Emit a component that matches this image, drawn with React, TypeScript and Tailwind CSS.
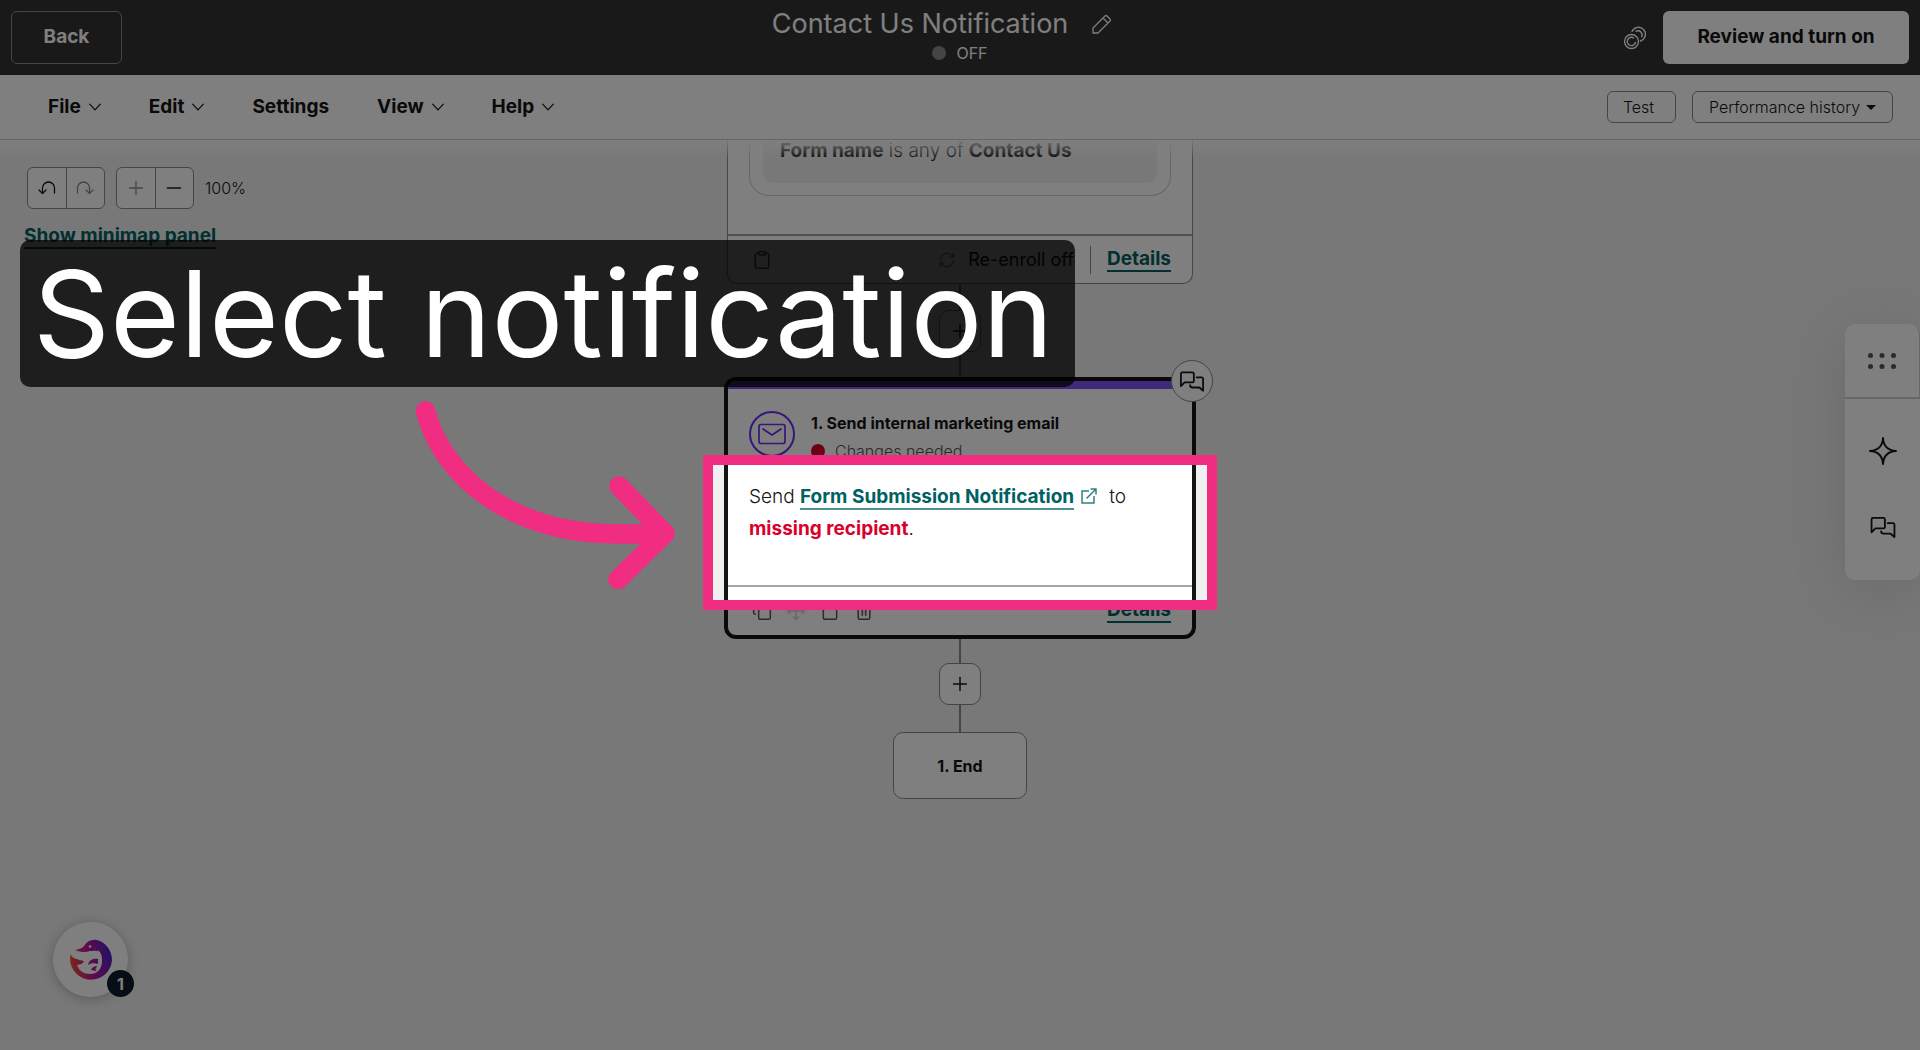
import type { ReactNode } from 'react';
import { Clipboard, Copy, Minus, Move, Plus, RefreshCw, Trash2 } from 'lucide-react';

const menus = [
  { label: 'File', hasMenu: true },
  { label: 'Edit', hasMenu: true },
  { label: 'Settings', hasMenu: false },
  { label: 'View', hasMenu: true },
  { label: 'Help', hasMenu: true },
];

const ChevronIcon = () => (
  <svg viewBox="0 0 12 8" className="h-2 w-3" fill="none" stroke="currentColor" strokeWidth="1.200" strokeLinecap="round" strokeLinejoin="round">
    <path d="M.7 1.200L6 6.800l5.300-5.600" />
  </svg>
);

const CommentsIcon = ({ className }: { className: string }) => (
  <svg viewBox="0 0 26 22" className={className} fill="none" stroke="currentColor" strokeWidth="1.900" strokeLinejoin="round" strokeLinecap="round">
    <path d="M1 16V2.500A1.500 1.500 0 0 1 2.500 1h11A1.500 1.500 0 0 1 15 2.500v8a1.500 1.500 0 0 1-1.500 1.500H5z" />
    <path d="M18 6.500h5.500A1.500 1.500 0 0 1 25 8v13l-4-3.500h-7.500A2.500 2.500 0 0 1 11 15" />
  </svg>
);

const PencilIcon = () => (
  <svg viewBox="0 0 20 20" className="size-5" fill="none" stroke="currentColor" strokeWidth="1.300" strokeLinejoin="round">
    <path d="M1 19v-5L13 2a1.500 1.500 0 0 1 2 0l3 3a1.500 1.500 0 0 1 0 2L6 19zM11 4l5 5" />
  </svg>
);

const CoinsIcon = () => (
  <svg viewBox="0 0 24 24" className="size-6" fill="none" stroke="currentColor" strokeWidth="1.400" strokeLinecap="round">
    <circle cx="8.500" cy="15.500" r="7" />
    <path d="M10.500 11.800a4.200 4.200 0 1 0 2 4.700" />
    <path d="M9 5.500a7 7 0 1 1 8.500 9.500" />
    <path d="M13 5.200a4.200 4.200 0 0 1 5.700 5.500" />
  </svg>
);

const UndoIcon = ({ className }: { className: string }) => (
  <svg viewBox="0 0 18 14" className={className} fill="none" stroke="currentColor" strokeWidth="1.300" strokeLinecap="round" strokeLinejoin="round">
    <path d="M1 9l3.500 3.500L8 9M4.500 12V7a6 6 0 0 1 12 0v5" />
  </svg>
);

const ExternalIcon = () => (
  <svg viewBox="0 0 16 16" className="mr-3 ml-[7px] inline size-4 align-[-1px] text-[#338182]" fill="none" stroke="currentColor" strokeWidth="1.500">
    <path d="M8 3H1v12h12V8M5.500 10.500L15 1M9.500 1H15v5.500" />
  </svg>
);

const MailIcon = () => (
  <svg viewBox="0 0 28 22" className="h-[22px] w-7" fill="none" stroke="currentColor" strokeWidth="1.700" strokeLinejoin="round" strokeLinecap="round">
    <rect x="1" y="1.500" width="26" height="19" rx="2" />
    <path d="M5 6l9 6 9-6" />
  </svg>
);

const SparkleIcon = () => (
  <svg viewBox="0 0 28 28" className="size-7" fill="none" stroke="currentColor" strokeWidth="1.900" strokeLinejoin="round">
    <path d="M14 1c.5 8 5 12.500 13 13-8 .5-12.500 5-13 13-.5-8-5-12.500-13-13 8-.5 12.500-5 13-13z" />
  </svg>
);

const GripIcon = () => (
  <svg viewBox="0 0 28 16" className="h-4 w-7" fill="currentColor">
    {[2.5, 14, 25.5].map((x) => (
      <g key={x}>
        <circle cx={x} cy="2.500" r="2.500" />
        <circle cx={x} cy="13.500" r="2.500" />
      </g>
    ))}
  </svg>
);

const DolphinLogo = () => (
  <svg viewBox="0 0 42 42" className="size-[42px]">
    <defs>
      <linearGradient id="dolphin" gradientUnits="userSpaceOnUse" x1="0" y1="26" x2="42" y2="16">
        <stop offset="0" stopColor="#f0562c" />
        <stop offset="0.450" stopColor="#c4159a" />
        <stop offset="1" stopColor="#4a22c8" />
      </linearGradient>
    </defs>
    <path
      fill="url(#dolphin)"
      d="M5 11c3-1 7-1 9-4 3-5 8-7 13-6 8 2 15 10 15 20a21 21 0 0 1-41.500 3C0 21 0 18 .5 15.500c2 4 7 5 13.500 6.500-1 3-4 3.500-7 4 2 6 7 9 13 9 8 0 12-6 12-13 0-4-1-7-3-9-3-2-6-1-9-1-5 2-10 1-15-1z"
    />
    <path fill="url(#dolphin)" d="M18 26c1-5 5-7 10-6v5c-4-1-7-1-10 1zM21 31c1-3 4-4 6-4l-1 5z" />
    <path fill="none" stroke="#fff" strokeWidth="1.200" strokeLinecap="round" d="M28 12c5 5 4 12-2 18" />
    <circle cx="20" cy="7.500" r="1.300" fill="#fff" />
  </svg>
);

const AddStep = () => (
  <button
    aria-label="Add step"
    className="flex size-[42px] items-center justify-center rounded-[10px] border border-[#8a8a8a] bg-white text-[#141414]"
  >
    <Plus className="size-[22px]" strokeWidth={1.6} />
  </button>
);

const DetailsLink = () => (
  <a href="#details" className="border-b-2 border-[#006162] text-[19px] leading-[22px] font-bold text-[#006162]">
    Details
  </a>
);

const Connector = ({ className }: { className: string }) => <div className={`w-0.5 bg-[#8a8a8a] ${className}`} />;

const SplitButton = ({ children }: { children: ReactNode }) => (
  <div className="flex h-[42px] w-[78px] divide-x divide-[#8a8a8a] overflow-hidden rounded-md border border-[#8a8a8a] bg-white">
    {children}
  </div>
);

const Header = () => (
  <header className="flex h-[75px] items-center justify-between bg-[#333333] px-[11px] text-white">
    <div className="flex flex-1">
      <button className="h-[53px] w-[111px] rounded-md border border-[#8a8a8a] text-[19px] font-bold">Back</button>
    </div>
    <div className="flex flex-col items-center">
      <div className="flex items-center gap-6 pr-9">
        <h1 className="text-[27px] leading-[34px]">Contact Us Notification</h1>
        <button aria-label="Rename workflow">
          <PencilIcon />
        </button>
      </div>
      <div className="mt-0.5 flex items-center gap-2.5 pb-1.5">
        <span className="size-3.5 rounded-full bg-[#8a8a8a]" />
        <span className="text-base leading-5">OFF</span>
      </div>
    </div>
    <div className="flex flex-1 items-center justify-end gap-4">
      <button aria-label="Credits">
        <CoinsIcon />
      </button>
      <button className="h-[53px] w-[246px] rounded-md bg-white text-[19px] font-bold text-[#141414]">Review and turn on</button>
    </div>
  </header>
);

const MenuBar = () => (
  <nav className="flex h-[65px] items-center justify-between border-b border-[#cccccc] bg-white pr-[27px] pl-12">
    <div className="flex gap-12">
      {menus.map(({ label, hasMenu }) => (
        <button key={label} className="flex items-center gap-2 text-[19px] font-bold">
          {label}
          {hasMenu && <ChevronIcon />}
        </button>
      ))}
    </div>
    <div className="flex gap-4">
      <button className="h-8 w-[69px] rounded-md border border-[#8a8a8a] pr-1.5 font-light">Test</button>
      <button className="flex h-8 w-[201px] items-center justify-center gap-1.5 rounded-md border border-[#8a8a8a] font-light">
        Performance history
        <span className="border-x-5 border-t-5 border-x-transparent border-t-[#141414]" />
      </button>
    </div>
  </nav>
);

const CanvasControls = () => (
  <div className="absolute top-[27px] left-[27px]">
    <div className="flex items-center gap-[11px]">
      <SplitButton>
        <button aria-label="Undo" className="flex flex-1 items-center justify-center">
          <UndoIcon className="h-3.5 w-[18px]" />
        </button>
        <button aria-label="Redo" className="flex flex-1 items-center justify-center text-[#8a8a8a]">
          <UndoIcon className="h-3.5 w-[18px] -scale-x-100" />
        </button>
      </SplitButton>
      <SplitButton>
        <button aria-label="Zoom in" className="flex flex-1 items-center justify-center text-[#8a8a8a]">
          <Plus className="size-[22px]" strokeWidth={1.4} />
        </button>
        <button aria-label="Zoom out" className="flex flex-1 items-center justify-center text-[#555555]">
          <Minus className="size-[22px]" strokeWidth={2} />
        </button>
      </SplitButton>
      <span className="text-base font-light">100%</span>
    </div>
    <a
      href="#minimap"
      className="-ml-[3px] mt-4 inline-block border-b-2 border-[#006162] text-[19px] leading-[22px] font-bold text-[#006162]"
    >
      Show minimap panel
    </a>
  </div>
);

const TriggerCard = () => (
  <section className="w-[466px] rounded-b-[10px] border border-t-0 border-[#8a8a8a] bg-white">
    <div className="px-[21px] pb-[38px]">
      <div className="rounded-b-[20px] border border-t-0 border-[#cccccc] px-[13px] pb-3">
        <p className="h-[43px] rounded-b-[10px] bg-[#f0f0f0] px-[17px] text-[19px] leading-[22px] font-light">
          <b className="font-bold">Form name</b> is any of <b className="font-bold">Contact Us</b>
        </p>
      </div>
    </div>
    <div className="flex h-[49px] items-center border-t-2 border-[#a0a0a0] px-[21px]">
      <button aria-label="Copy trigger" className="ml-[3px]">
        <Clipboard className="size-5 text-[#555555]" strokeWidth={1.8} />
      </button>
      <RefreshCw className="mr-3 ml-auto size-[18px] text-[#8a8a8a]" strokeWidth={1.6} />
      <span className="text-lg">Re-enroll off</span>
      <span className="mx-4 h-7 w-px bg-[#8a8a8a]" />
      <DetailsLink />
    </div>
  </section>
);

const EmailCard = () => (
  <section className="relative w-[472px] rounded-xl border-4 border-[#141414] bg-white">
    <div className="h-2 rounded-t-lg bg-[#7e52f0]" />
    <div className="flex h-[78px] gap-4 px-[21px] pt-[22px]">
      <span className="flex size-[46px] shrink-0 items-center justify-center rounded-full border-2 border-[#6b2cf0] text-[#6b2cf0]">
        <MailIcon />
      </span>
      <div>
        <h2 className="text-base leading-6 font-bold">1. Send internal marketing email</h2>
        <p className="mt-1.5 flex items-center gap-2.5 text-base leading-5 font-light text-[#555555]">
          <span className="size-3.5 rounded-full bg-[#d9002b]" />
          Changes needed
        </p>
      </div>
    </div>
    <p className="h-[118px] px-[21px] pt-3.5 text-[19px] leading-8 font-light">
      Send{' '}
      <a href="#email" className="border-b-2 border-[#4d9091] font-bold text-[#006162]">
        Form Submission Notification
      </a>
      <ExternalIcon />
      to
      <br />
      <b className="font-bold text-[#d9002b]">missing recipient</b>.
    </p>
    <div className="flex h-[50px] items-center gap-3.5 border-t-2 border-[#a0a5a5] px-[21px] text-[#555555]">
      <button aria-label="Clone action" className="ml-[3px]">
        <Copy className="size-5" strokeWidth={1.8} />
      </button>
      <button aria-label="Move action" className="text-[#d0d0d0]">
        <Move className="size-5" strokeWidth={1.8} />
      </button>
      <button aria-label="Copy action">
        <Clipboard className="size-5" strokeWidth={1.8} />
      </button>
      <button aria-label="Delete action" className="mr-auto">
        <Trash2 className="size-5" strokeWidth={1.8} />
      </button>
      <DetailsLink />
    </div>
    <button
      aria-label="Comments"
      className="absolute -top-[21px] -right-[21px] flex size-[42px] items-center justify-center rounded-full border border-[#8a8a8a] bg-white"
    >
      <CommentsIcon className="h-[21px] w-6" />
    </button>
  </section>
);

const SidePanel = () => (
  <aside className="absolute top-[184px] right-0 flex w-[75px] flex-col items-center rounded-[10px] bg-white shadow-[0_10px_60px_rgba(0,0,0,0.12)]">
    <button
      aria-label="Drag panel"
      className="flex h-[75px] w-full items-center justify-center rounded-t-[10px] border-r border-b-2 border-[#cfcfcf] text-[#555555]"
    >
      <GripIcon />
    </button>
    <button aria-label="Assistant" className="mt-[38px]">
      <SparkleIcon />
    </button>
    <button aria-label="Comments" className="mt-[52px] mb-[42px]">
      <CommentsIcon className="h-[21px] w-[26px]" />
    </button>
  </aside>
);

const ChatWidget = () => (
  <button
    aria-label="Open help, 1 unread"
    className="absolute bottom-[53px] left-[53px] flex size-[75px] items-center justify-center rounded-full bg-white shadow-[0_2px_12px_rgba(0,0,0,0.25)]"
  >
    <DolphinLogo />
    <span className="absolute -right-1.5 bottom-0 flex size-[27px] items-center justify-center rounded-full bg-[#0c1a2c] text-base font-bold text-white">
      1
    </span>
  </button>
);

// Dims the page around the highlighted step and points at it
const Walkthrough = () => (
  <div className="pointer-events-none absolute inset-0 overflow-hidden">
    <div className="absolute top-[455px] left-1/2 h-[155px] w-[514px] -translate-x-1/2 border-[10px] border-[#f02d81] shadow-[0_0_0_2000px_rgba(0,0,0,0.5)]" />
    <p className="absolute top-60 left-5 h-[147px] w-[1055px] rounded-[10px] bg-black/75 px-[13px] text-[120px] leading-[147px] whitespace-nowrap text-white">
      Select notification
    </p>
    <svg
      viewBox="0 0 270 200"
      className="absolute top-[395px] left-[410px] h-[200px] w-[270px]"
      fill="none"
      stroke="#f02d81"
      strokeWidth="19.500"
      strokeLinecap="round"
      strokeLinejoin="round"
    >
      <path d="M15.500 16C32 80 100 141 215 139q20 0 40-1M209 91l46 47.500-47 46" />
    </svg>
  </div>
);

const App = () => {
  return (
    <div className="relative flex min-h-screen flex-col bg-[#f0f0f0] font-[Inter,'Liberation_Sans',sans-serif] text-[#141414]">
      <Header />
      <MenuBar />
      <main className="relative flex flex-1 flex-col items-center">
        <TriggerCard />
        <Connector className="h-[26px]" />
        <AddStep />
        <Connector className="h-[25px]" />
        <EmailCard />
        <Connector className="h-6" />
        <AddStep />
        <Connector className="h-[27px]" />
        <div className="flex h-[67px] w-[134px] items-center justify-center rounded-[10px] border border-[#8a8a8a] bg-white text-base font-bold">
          1. End
        </div>
        <div className="absolute inset-x-0 top-0 h-5 bg-linear-to-b from-white/90 to-transparent" />
        <CanvasControls />
        <SidePanel />
        <ChatWidget />
      </main>
      <Walkthrough />
    </div>
  );
};

export default App;
